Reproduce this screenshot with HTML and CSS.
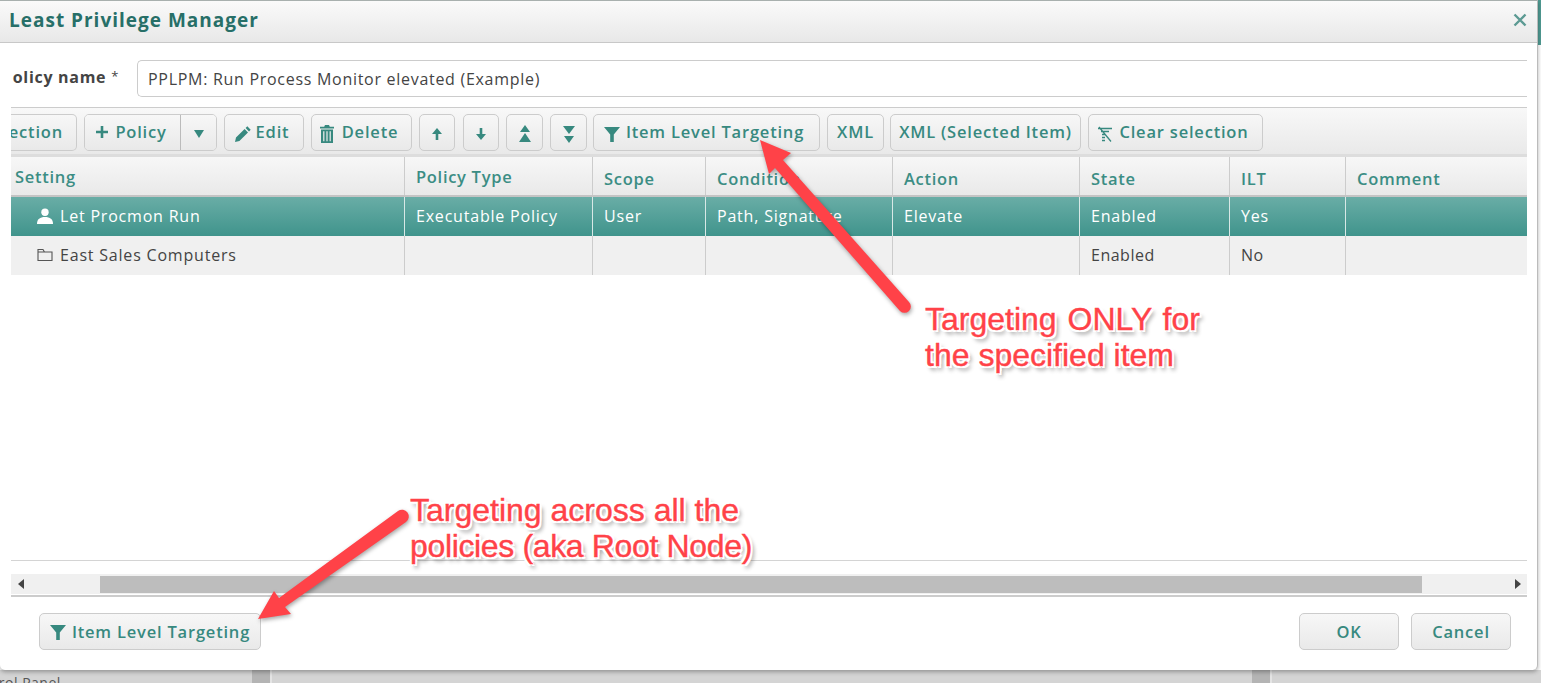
FILE: index.html
```html
<!DOCTYPE html>
<html>
<head>
	<meta charset="utf-8" />
	<title>Least Privilege Manager</title>
	<link rel="stylesheet" href="styles.css">
</head>
<body>
	<svg class="defs" width="0" height="0">
		<symbol id="funnel" viewBox="0 0 16 16"><path d="M0 1h16L9.800 8.500V16H6.200V8.500z"/></symbol>
	</svg>
	<div class="top">
		<div class="dialog">
			<div class="title-bar">
				<span class="title">Least Privilege Manager</span>
				<svg class="close" viewBox="0 0 14 14"><path d="M1.500 1.500l11 11M12.500 1.500l-11 11"/></svg>
			</div>
			<div class="name-row">
				<div class="name-label"><span>Policy name <i>*</i></span></div>
				<div class="name-input">PPLPM: Run Process Monitor elevated (Example)</div>
			</div>
			<div class="grid-wrap">
				<div class="toolbar">
					<div class="btn btn-cut"><span>Selection</span></div>
					<div class="btn-split">
						<div class="part part-main"><svg class="ico" viewBox="0 0 14 14"><path d="M5.700 1h2.600v4.700H13v2.600H8.300V13H5.700V8.300H1V5.700h4.700z"/></svg>Policy</div>
						<div class="part part-caret"><svg class="ico-sm" viewBox="0 0 12 10"><path d="M1 1h10L6 9z"/></svg></div>
					</div>
					<div class="btn btn-edit"><svg class="ico-edit" viewBox="0 0 18 18"><path d="M13.300 1.300l3.400 3.400-1.700 1.700-3.400-3.400zM10.600 4l3.400 3.400-8.600 8.600L1 17l1-4.400z"/></svg>Edit</div>
					<div class="btn btn-delete"><svg class="ico-trash" viewBox="0 0 14 18"><path d="M5 0h4l.8 1.800H14v1.700H0V1.800h4.200zM1 4.500h12V18H1zM3.200 6.300v10h1.200v-10zm3.200 0v10h1.200v-10zm3.200 0v10h1.200v-10z" fill-rule="evenodd"/></svg>Delete</div>
					<div class="btn btn-sq btn-up"><svg class="ico-arrow" viewBox="0 0 12 14"><path d="M6 1l5 6H7.300v6H4.700V7H1z"/></svg></div>
					<div class="btn btn-sq btn-down"><svg class="ico-arrow" viewBox="0 0 12 14"><path d="M6 13L1 7h3.700V1h2.600v6H11z"/></svg></div>
					<div class="btn btn-sq btn-top"><svg class="ico-double" viewBox="0 0 14 18"><path d="M7 0l5 7H2zM7 8l6 9H1z"/></svg></div>
					<div class="btn btn-sq btn-bottom"><svg class="ico-double" viewBox="0 0 14 18"><path d="M1 1h12L7 9zM2 11h10l-5 7z"/></svg></div>
					<div class="btn btn-ilt"><svg class="ico-funnel"><use href="#funnel"/></svg>Item Level Targeting</div>
					<div class="btn btn-xml">XML</div>
					<div class="btn btn-xml-sel">XML (Selected Item)</div>
					<div class="btn btn-clear"><svg class="ico-clear" viewBox="0 0 16 16"><path d="M1 2.500h14M4 5.500h8M5 8.500h3M5 11.500h3M5 14.500h3M2 1l12 14.500"/></svg>Clear selection</div>
				</div>
				<div class="table">
					<div class="row head">
						<div class="cell up">Setting</div>
						<div class="cell up">Policy Type</div>
						<div class="cell">Scope</div>
						<div class="cell">Condition</div>
						<div class="cell">Action</div>
						<div class="cell">State</div>
						<div class="cell">ILT</div>
						<div class="cell">Comment</div>
					</div>
					<div class="row selected">
						<div class="cell tree"><svg class="ico-tree" viewBox="0 0 16 16"><circle cx="8" cy="4.200" r="3.700"/><path d="M0 16c0-5 3-7 8-7s8 2 8 7z"/></svg>Let Procmon Run</div>
						<div class="cell">Executable Policy</div>
						<div class="cell">User</div>
						<div class="cell">Path, Signature</div>
						<div class="cell">Elevate</div>
						<div class="cell">Enabled</div>
						<div class="cell">Yes</div>
						<div class="cell"></div>
					</div>
					<div class="row plain">
						<div class="cell tree"><svg class="ico-tree ico-folder" viewBox="0 0 16 14"><path d="M1 12.500V1.500h5l1.500 2.500h7.500v8.500zM1 4h6.500"/></svg>East Sales Computers</div>
						<div class="cell"></div>
						<div class="cell"></div>
						<div class="cell"></div>
						<div class="cell"></div>
						<div class="cell">Enabled</div>
						<div class="cell">No</div>
						<div class="cell"></div>
					</div>
				</div>
				<div class="table-rest"></div>
				<div class="hscroll">
					<svg class="scroll-arrow" viewBox="0 0 6 10"><path d="M6 0v10L0 5z"/></svg>
					<div class="track"><div class="thumb"></div></div>
					<svg class="scroll-arrow" viewBox="0 0 6 10"><path d="M0 0v10l6-5z"/></svg>
				</div>
			</div>
			<div class="footer">
				<div class="btn btn-root"><svg class="ico-funnel"><use href="#funnel"/></svg>Item Level Targeting</div>
				<div class="footer-right">
					<div class="btn btn-ok">OK</div>
					<div class="btn btn-ok">Cancel</div>
				</div>
			</div>
		</div>
		<div class="rail"></div>
	</div>
	<div class="behind">
		<span class="behind-text">Control Panel</span>
		<div class="behind-bar"></div>
		<div class="behind-bar bar-right"></div>
	</div>

	<svg class="arrows" viewBox="0 0 1541 683">
		<path d="M760 140L791 153 783 160 909 302A6 6 0 0 1 900 311L775 168 769 174z"/>
		<path d="M258 619L274 591 279 598 398 511A6.500 6.500 0 0 1 406 522L285 607 291 614z"/>
	</svg>
	<div class="note note-item"><span class="line-wide">Targeting ONLY for</span><br>the specified item</div>
	<div class="note note-root">Targeting across all the<br><span class="line-narrow">policies (aka Root Node)</span></div>
</body>
</html>
```

FILE: styles.css
```css
html, body {
	margin: 0;
	height: 683px;
	overflow: hidden;
	background-color: #fff;
	font-family: "Open Sans", sans-serif;
	color: #333;
}

.defs {
	display: block;
	height: 0;
}

.top {
	display: flex;
	height: 670px;
}

.dialog {
	width: 1538px;
	height: 670px;
	box-sizing: border-box;
	display: flex;
	flex-direction: column;
	background-color: #fff;
	border-right: 1px solid #bbb;
	border-radius: 0 0 5px 5px;
	box-shadow: 0 2px 4px rgba(0, 0, 0, 0.3);
	position: relative;
	z-index: 1;
}

.rail {
	width: 3px;
	height: 45px;
	background-color: #4f9a92;
}

.title-bar {
	height: 43px;
	box-sizing: border-box;
	flex: none;
	display: flex;
	align-items: center;
	justify-content: space-between;
	padding: 0 10px 3px 9px;
	border-top: 1px solid #a8b0ae;
	border-bottom: 1px solid #c8c8c8;
	background: linear-gradient(#fafafa, #e8e8e8);
}

.title {
	font-size: 19px;
	font-weight: 700;
	letter-spacing: 1px;
	color: #276f68;
}

.close {
	width: 14px;
	height: 14px;
	fill: none;
	stroke: #5c9a93;
	stroke-width: 2.400;
}

.name-row {
	height: 64px;
	flex: none;
	box-sizing: border-box;
	padding: 17px 10px 0 12px;
	display: flex;
	overflow: hidden;
}

.name-label {
	width: 125px;
	flex: none;
	overflow: hidden;
	display: flex;
	justify-content: flex-end;
	padding-top: 6px;
	font-size: 16px;
	font-weight: 700;
	letter-spacing: 0.700px;
	color: #444;
	white-space: nowrap;
}

.name-label span {
	flex: none;
	margin-right: 18px;
}

.name-label i {
	font-weight: 400;
	font-size: 13px;
	font-style: normal;
	vertical-align: 2px;
}

.name-input {
	flex: 1;
	height: 37px;
	box-sizing: border-box;
	padding: 7px 10px;
	border: 1px solid #ccc;
	border-right: none;
	border-radius: 5px 0 0 5px;
	font-size: 16px;
	letter-spacing: 0.710px;
	color: #444;
}

.grid-wrap {
	margin: 0 10px 0 11px;
	flex: 1;
	display: flex;
	flex-direction: column;
	border-bottom: 2px solid #ccc;
}

.toolbar {
	height: 50px;
	flex: none;
	box-sizing: border-box;
	display: flex;
	gap: 7px;
	padding-top: 6px;
	border-top: 1px solid #ccc;
	border-bottom: 3px solid #ddd;
	background: linear-gradient(#f8f8f8, #e9e9e9);
	overflow: hidden;
}

.btn, .part {
	height: 37px;
	box-sizing: border-box;
	flex: none;
	display: flex;
	align-items: center;
	justify-content: center;
	padding-bottom: 2px;
	font-size: 16.500px;
	font-weight: 600;
	letter-spacing: 0.800px;
	white-space: nowrap;
	color: #37897f;
	background: linear-gradient(#f7f7f7, #e9e9e9);
}

.btn {
	border: 1px solid #ccc;
	border-radius: 5px;
}

.btn-cut {
	width: 66px;
	justify-content: flex-end;
	padding-right: 13px;
	border-left: none;
	border-radius: 0 5px 5px 0;
	overflow: hidden;
}

.btn-cut span {
	flex: none;
}

.btn-split {
	display: flex;
	flex: none;
	height: 37px;
	box-sizing: border-box;
	border: 1px solid #ccc;
	border-radius: 5px;
	overflow: hidden;
}

.part {
	height: 35px;
}

.part-main {
	width: 96px;
	gap: 6px;
	padding-right: 3px;
	border-right: 1px solid #bbb;
}

.part-caret {
	width: 35px;
}

.ico {
	width: 14px;
	height: 14px;
	fill: #37897f;
}

.ico-sm {
	width: 12px;
	height: 10px;
	fill: #37897f;
	margin-top: 5px;
}

.ico-edit {
	width: 18px;
	height: 18px;
	fill: #37897f;
	margin-right: 4px;
	margin-top: 5px;
}

.ico-trash {
	width: 14px;
	height: 18px;
	fill: #37897f;
	margin-right: 8px;
	margin-top: 5px;
}

.ico-arrow {
	width: 12px;
	height: 14px;
	fill: #37897f;
	margin-top: 5px;
}

.ico-double {
	width: 14px;
	height: 18px;
	fill: #37897f;
	margin-top: 4px;
}

.ico-funnel {
	width: 16px;
	height: 16px;
	fill: #37897f;
	margin-right: 6px;
	margin-top: 4px;
}

.ico-clear {
	width: 16px;
	height: 16px;
	fill: none;
	stroke: #37897f;
	stroke-width: 1.300;
	margin-right: 6px;
	margin-top: 5px;
}

.btn-edit { width: 80px; padding-right: 5px; }
.btn-delete { width: 101px; padding-right: 5px; }
.btn-up { width: 36px; }
.btn-down { width: 36px; margin-left: 1px; }
.btn-top { width: 37px; }
.btn-bottom { width: 37px; }
.btn-ilt { width: 227px; margin-left: -1px; padding-right: 5px; }
.btn-xml { width: 57px; }
.btn-xml-sel { width: 191px; margin-left: -1px; }
.btn-clear { width: 175px; padding-right: 5px; }

.table {
	flex: none;
}

.row {
	display: grid;
	grid-template-columns: 394px 188px 113px 187px 187px 150px 116px 1fr;
	height: 39px;
	font-size: 16px;
	letter-spacing: 0.500px;
}

.cell {
	box-sizing: border-box;
	padding: 0 0 2px 11px;
	display: flex;
	align-items: center;
	white-space: nowrap;
	border-right: 1px solid #ccc;
}

.cell:last-child {
	border-right: none;
}

.head {
	height: 40px;
	box-sizing: border-box;
	border-bottom: 2px solid #c4c4c4;
	background: linear-gradient(#f7f7f7, #e9e9e9);
	color: #3b8d84;
	font-weight: 600;
	font-size: 16.500px;
	letter-spacing: 0.700px;
}

.head .cell {
	padding-top: 5px;
	padding-bottom: 0;
}

.head .cell:first-child {
	padding-left: 4px;
}

.head .up {
	padding-top: 0;
}

.selected {
	background: linear-gradient(#69ada6, #40948c);
	color: #fff;
	font-weight: 500;
	letter-spacing: 0.800px;
}

.selected .cell {
	border-right-color: #d8e8e6;
}

.plain {
	background-color: #f0f0f0;
	color: #444;
	letter-spacing: 0.800px;
}

.plain .cell:nth-child(6), .plain .cell:nth-child(7) {
	letter-spacing: 0.500px;
}

.tree {
	padding-left: 26px;
}

.ico-tree {
	width: 16px;
	height: 16px;
	fill: #fff;
	margin-right: 7px;
}

.ico-folder {
	height: 14px;
	fill: none;
	stroke: #555;
	stroke-width: 1.100;
}

.table-rest {
	flex: none;
	height: 285px;
	border-bottom: 1px solid #d4d4d4;
}

.hscroll {
	margin-top: 13px;
	height: 20px;
	flex: none;
	display: flex;
	align-items: center;
	background-color: #f0f0f0;
}

.scroll-arrow {
	width: 6px;
	height: 10px;
	flex: none;
	fill: #444;
	margin: 0 6px 0 7px;
}

.track {
	flex: 1;
	padding-left: 70px;
	padding-right: 86px;
}

.thumb {
	height: 17px;
	background-color: #bdbdbd;
}

.footer {
	flex: none;
	height: 73px;
	box-sizing: border-box;
	display: flex;
	justify-content: space-between;
	padding: 16px 26px 0 39px;
}

.footer .btn {
	padding-bottom: 0;
}

.footer .ico-funnel {
	margin-top: 0;
}

.btn-root {
	width: 222px;
}

.footer-right {
	display: flex;
	gap: 12px;
}

.btn-ok {
	width: 100px;
}

.behind {
	height: 13px;
	background-color: #d4d4d4;
	position: relative;
	overflow: hidden;
}

.behind-text {
	position: absolute;
	left: -34px;
	top: 3px;
	font-size: 14px;
	letter-spacing: 0.500px;
	color: #555;
}

.behind-bar {
	position: absolute;
	left: 252px;
	top: 0;
	width: 18px;
	height: 13px;
	background-color: #b4b4b4;
	border-right: 2px solid #e4e4e4;
}

.bar-right {
	left: 1252px;
}

.arrows {
	position: absolute;
	left: 0;
	top: 0;
	width: 1541px;
	height: 683px;
	z-index: 2;
	fill: #ff4248;
	filter: drop-shadow(1px 2px 2px rgba(0, 0, 0, 0.35));
	pointer-events: none;
}

.note {
	position: absolute;
	z-index: 3;
	font-family: "Liberation Sans", Arial, sans-serif;
	font-size: 32px;
	line-height: 36px;
	white-space: nowrap;
	color: #ff4248;
	-webkit-text-stroke: 0.400px #ff4248;
	text-shadow: 1px 0 0 #fff, -1px 0 0 #fff, 0 1px 0 #fff, 0 -1px 0 #fff,
		2px 2px 0 #fff, -2px 2px 0 #fff, 2px -2px 0 #fff, -2px -2px 0 #fff,
		3px 4px 4px rgba(0, 0, 0, 0.45);
}

.line-wide {
	word-spacing: 2px;
}

.line-narrow {
	letter-spacing: -0.350px;
}

.note-item {
	left: 925px;
	top: 301px;
}

.note-root {
	left: 410px;
	top: 492px;
}
```
